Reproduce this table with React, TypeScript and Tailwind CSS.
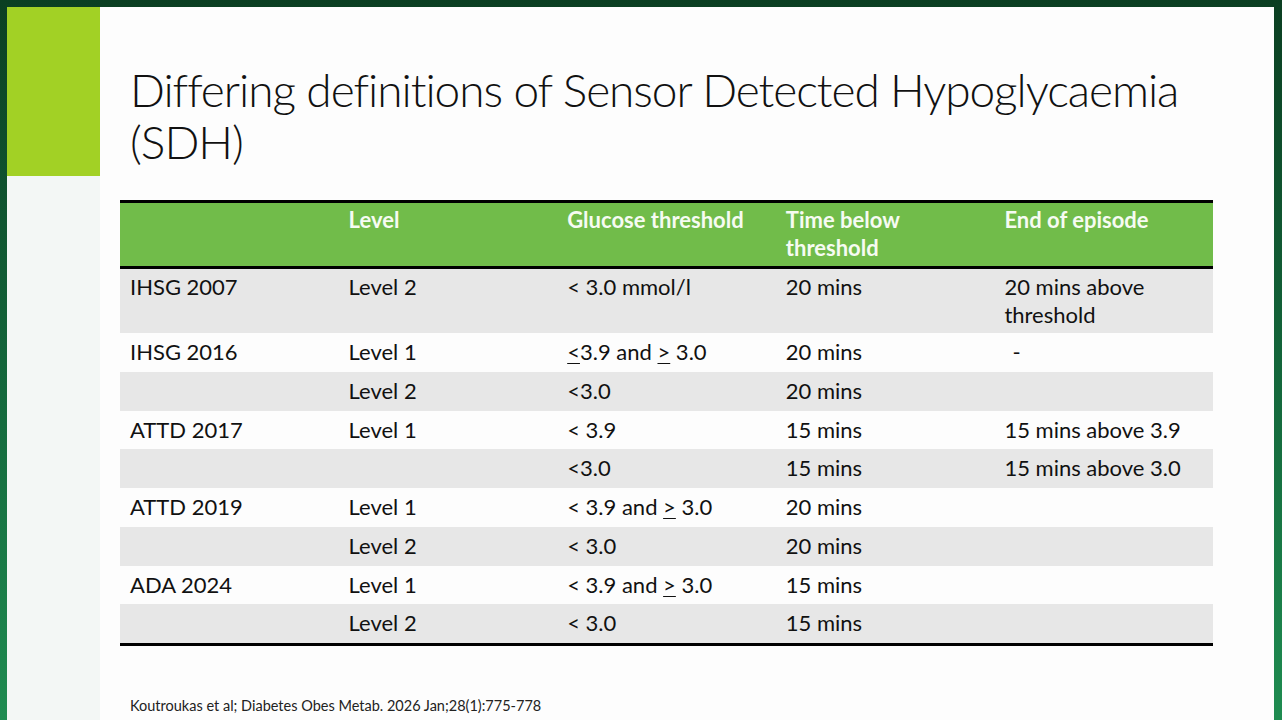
import type { ReactNode } from 'react'

type Row = {
  cells: ReactNode[]
  shaded: boolean
  tall?: boolean
}

const le = <span className="underline underline-offset-[3px] decoration-1">&lt;</span>
const ge = <span className="underline underline-offset-[3px] decoration-1">&gt;</span>

const rows: Row[] = [
  { cells: ['IHSG 2007', 'Level 2', '< 3.0 mmol/l', '20 mins', <>20 mins above<br />threshold</>], shaded: true, tall: true },
  { cells: ['IHSG 2016', 'Level 1', <>{le}3.9 and {ge} 3.0</>, '20 mins', <span className="pl-[8px]">-</span>], shaded: false },
  { cells: ['', 'Level 2', '<3.0', '20 mins', ''], shaded: true },
  { cells: ['ATTD 2017', 'Level 1', '< 3.9', '15 mins', '15 mins above 3.9'], shaded: false },
  { cells: ['', '', '<3.0', '15 mins', '15 mins above 3.0'], shaded: true },
  { cells: ['ATTD 2019', 'Level 1', <>&lt; 3.9 and {ge} 3.0</>, '20 mins', ''], shaded: false },
  { cells: ['', 'Level 2', '< 3.0', '20 mins', ''], shaded: true },
  { cells: ['ADA 2024', 'Level 1', <>&lt; 3.9 and {ge} 3.0</>, '15 mins', ''], shaded: false },
  { cells: ['', 'Level 2', '< 3.0', '15 mins', ''], shaded: true },
]

const headers: ReactNode[] = ['', 'Level', 'Glucose threshold', <>Time below<br />threshold</>, 'End of episode']

export default function App() {
  return (
    <div
      className="w-[1282px] h-[720px] overflow-hidden bg-gradient-to-b from-[#0b3f22] via-[#13653a] to-[#1f8c51] pt-[7px] pl-[7px] pr-[8px] text-black"
      style={{ fontFamily: 'Lato, "Open Sans", sans-serif' }}
    >
      <div className="flex h-full bg-[#fdfdfd]">
        <aside className="flex w-[93px] flex-col">
          <div className="h-[169px] bg-[#a2d125]" />
          <div className="flex-1 bg-[#f3f7f5]" />
        </aside>

        <main className="flex flex-1 flex-col">
          <h1 className="mt-[57px] pl-[30px] whitespace-nowrap text-[46px] leading-[52px] font-light tracking-[-1.05px] text-[#111]">
            Differing definitions of Sensor Detected Hypoglycaemia
            <br />
            (SDH)
          </h1>

          <div className="ml-[20px] mt-[32px] w-[1093px] border-y-[3px] border-black">
            <div className="grid h-[66px] grid-cols-5 border-b-[3px] border-black bg-[#71bc4a] text-[22px] leading-[28px] font-bold text-[#f6fbf2]">
              {headers.map((h, i) => (
                <div key={i} className="px-[10px] pt-[3px]">{h}</div>
              ))}
            </div>
            {rows.map((r, i) => (
              <div
                key={i}
                className={`grid grid-cols-5 text-[22px] leading-[28px] text-[#111] ${r.shaded ? 'bg-[#e7e7e7]' : 'bg-[#fdfdfd]'} ${r.tall ? 'h-[64px] pt-[4px]' : 'h-[38.75px] pt-[5px]'}`}
              >
                {r.cells.map((c, j) => (
                  <div key={j} className="px-[10px] whitespace-nowrap">{c}</div>
                ))}
              </div>
            ))}
          </div>

          <p className="mt-auto mb-[5px] pl-[30px] text-[14.5px] leading-[18px] text-[#222]">
            Koutroukas et al; Diabetes Obes Metab. 2026 Jan;28(1):775-778
          </p>
        </main>
      </div>
    </div>
  )
}
